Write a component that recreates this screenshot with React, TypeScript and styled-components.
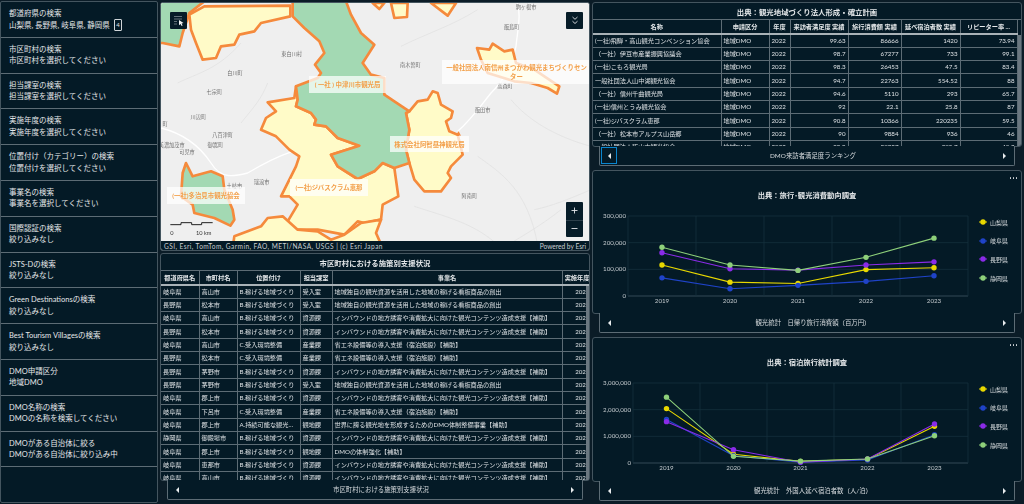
import React from "react";
import styled, { createGlobalStyle } from "styled-components";

const GlobalStyle = createGlobalStyle`
  html, body {
    margin: 0;
    padding: 0;
    background-color: #0b1c27;
  }
  body {
    font-family: Lato, "Noto Sans CJK JP", sans-serif;
    color: #e4e7e9;
    overflow: hidden;
  }
  * {
    box-sizing: border-box;
  }
`;

const Page = styled.div`
  width: 1024px;
  height: 504px;
  display: grid;
  grid-template-columns: 158px 430px 430px;
  column-gap: 2px;
  overflow: hidden;
  filter: blur(0.3px);
`;

/* ---- filter column ---- */
const FilterList = styled.div`
  margin-top: 1px;
  height: 502px;
  background-color: #041a26;
  border: 1px solid #44555f;
  border-radius: 2px;
`;
const FilterItem = styled.div`
  height: 35.8px;
  padding: 6px 8px 0;
  border-bottom: 1px solid #5d6c75;
  font-size: 7.5px;
  line-height: 11.4px;
  white-space: nowrap;
  display: flex;
  flex-direction: column;
`;
const FilterValue = styled.div`
  display: flex;
  align-items: center;
  gap: 4px;
`;
const CountBadge = styled.span`
  width: 8px;
  height: 12px;
  border: 1px solid #d0d5d8;
  border-radius: 1px;
  font-size: 6px;
  line-height: 10px;
  text-align: center;
`;

/* ---- shared panels ---- */
const Column = styled.div`
  display: flex;
  flex-direction: column;
`;
const Block = styled.div<{ $top: number }>`
  margin-top: ${(p) => p.$top}px;
  display: flex;
  flex-direction: column;
`;
const Panel = styled.div<{ $height: number }>`
  position: relative;
  height: ${(p) => p.$height}px;
  background-color: #041a26;
  border: 1px solid #44555f;
  border-radius: 3px;
  overflow: hidden;
`;
const Tab = styled.div`
  position: relative;
  height: 20px;
  margin: -1px 7px 0;
  padding: 0 7px;
  background-color: #041a26;
  border: 1px solid #5d6c75;
  border-top: none;
  border-radius: 0 0 2px 2px;
  display: flex;
  align-items: center;
  justify-content: space-between;
  font-size: 6.4px;
  color: #d8dcdf;
`;
const TabLabel = styled.span`
  margin-left: 12px;
`;
const ArrowBox = styled.div<{ $focus?: boolean }>`
  width: 16px;
  height: 17px;
  margin: 0 -6px;
  display: flex;
  align-items: center;
  justify-content: center;
  border: 1px solid ${(p) => (p.$focus ? "#0a86cf" : "transparent")};
`;
const TableTitle = styled.div`
  height: 17px;
  display: flex;
  align-items: center;
  justify-content: center;
  font-size: 7.4px;
  font-weight: 700;
  border-bottom: 1px solid #5d6c75;
`;
const DataTable = styled.table<{ $width: number }>`
  width: ${(p) => p.$width}px;
  table-layout: fixed;
  border-collapse: collapse;
  font-size: 6.2px;
`;
const HeadCell = styled.th`
  height: 14px;
  padding: 0 2px;
  font-weight: 700;
  font-size: 6.2px;
  text-align: center;
  border-right: 1px solid #5d6c75;
  border-bottom: 2px solid #a9b2b7;
  white-space: nowrap;
  overflow: hidden;
  color: #e6e9eb;
`;
const Cell = styled.td<{ $right?: boolean }>`
  height: 13.33px;
  padding: 0 2px;
  line-height: 10px;
  text-align: ${(p) => (p.$right ? "right" : "left")};
  border-right: 1px solid #5d6c75;
  border-bottom: 1px solid #5d6c75;
  white-space: nowrap;
  overflow: hidden;
  text-overflow: ellipsis;
  color: #dde1e4;
`;
const YearCell = styled(Cell)`
  text-overflow: clip;
`;
const ScrollThumb = styled.div<{ $top: number; $height: number }>`
  position: absolute;
  right: 0;
  top: ${(p) => p.$top}px;
  width: 3px;
  height: ${(p) => p.$height}px;
  background-color: #6a7780;
`;

/* ---- map ---- */
const MapFrame = styled(Panel)`
  background-color: #efefef;
  display: flex;
  flex-direction: column;
`;
const MapCanvas = styled.div`
  position: relative;
  flex: 1;
  overflow: hidden;
`;
const MapPicture = styled.svg`
  display: block;
  width: 430px;
  height: 242px;
`;
const MapLabel = styled.div<{ $x: number; $y: number; $w: number; $h: number }>`
  position: absolute;
  left: ${(p) => p.$x}px;
  top: ${(p) => p.$y}px;
  width: ${(p) => p.$w}px;
  height: ${(p) => p.$h}px;
  padding: 0 2px;
  display: flex;
  align-items: center;
  justify-content: center;
  text-align: center;
  background-color: rgba(255, 255, 255, 0.72);
  color: #f3a04a;
  font-size: 6.4px;
  font-weight: 700;
  line-height: 9px;
`;
const MapButton = styled.div<{ $x: number; $y: number }>`
  position: absolute;
  left: ${(p) => p.$x}px;
  top: ${(p) => p.$y}px;
  width: 17px;
  height: 17px;
  border-radius: 1px;
  background-color: #061c28;
  display: flex;
  align-items: center;
  justify-content: center;
`;
const ZoomStack = styled.div`
  position: absolute;
  left: 405px;
  top: 199px;
  width: 17px;
  background-color: #061c28;
  border-radius: 1px;
  display: flex;
  flex-direction: column;
`;
const ZoomButton = styled.div`
  height: 17.5px;
  display: flex;
  align-items: center;
  justify-content: center;
  & + & {
    border-top: 1px solid #2c3f4a;
  }
`;
const Attribution = styled.div`
  height: 9px;
  padding: 0 3px;
  background-color: #041a26;
  display: flex;
  align-items: center;
  justify-content: space-between;
  font-size: 6.6px;
  color: #c9ced1;
  white-space: nowrap;
`;
const AttributionSource = styled.span`
  letter-spacing: 0.42px;
`;

/* ---- charts ---- */
const Dots = styled.div`
  position: absolute;
  right: 4px;
  top: 6px;
  display: flex;
  gap: 1.5px;
`;
const Dot = styled.span`
  width: 1.5px;
  height: 1.5px;
  border-radius: 50%;
  background-color: #d6dadd;
`;
const ChartTitle = styled.div`
  height: 37px;
  padding-top: 20px;
  text-align: center;
  font-size: 7.3px;
  line-height: 10px;
  font-weight: 700;
  color: #e6e9eb;
`;
const ChartRow = styled.div`
  display: flex;
  align-items: flex-start;
`;
const ChartPicture = styled.svg`
  display: block;
  flex: none;
  width: 378px;
  height: 98px;
`;
const Legend = styled.div`
  margin: 9px 0 0 8px;
  display: flex;
  flex-direction: column;
  gap: 8.7px;
`;
const LegendItem = styled.div`
  height: 10px;
  display: flex;
  align-items: center;
  gap: 3px;
  font-size: 6px;
  color: #d3d8db;
  white-space: nowrap;
`;

const filters: [string, string][] = [
  ["都道府県の検索", "山梨県, 長野県, 岐阜県, 静岡県"],
  ["市区町村の検索", "市区町村を選択してください"],
  ["担当課室の検索", "担当課室を選択してください"],
  ["実施年度の検索", "実施年度を選択してください"],
  ["位置付け（カテゴリー）の検索", "位置付けを選択してください"],
  ["事業名の検索", "事業名を選択してください"],
  ["国際認証の検索", "絞り込みなし"],
  ["JSTS-Dの検索", "絞り込みなし"],
  ["Green Destinationsの検索", "絞り込みなし"],
  ["Best Tourism Villagesの検索", "絞り込みなし"],
  ["DMO申請区分", "地域DMO"],
  ["DMO名称の検索", "DMOの名称を検索してください"],
  ["DMOがある自治体に絞る", "DMOがある自治体に絞り込み中"],
];

const inbound = "インバウンドの地方誘客や消費拡大に向けた観光コンテンツ造成支援【補助】";
const signboard = "地域独自の観光資源を活用した地域の稼げる看板商品の創出";
const energy = "省エネ設備等の導入支援（宿泊施設）【補助】";
const kasegu = "B.稼げる地域づくり";

const supportRows: string[][] = [
  ["岐阜県", "高山市", kasegu, "受入室", signboard],
  ["長野県", "松本市", kasegu, "受入室", signboard],
  ["岐阜県", "高山市", kasegu, "資源課", inbound],
  ["長野県", "松本市", kasegu, "資源課", inbound],
  ["岐阜県", "高山市", "C.受入環境整備", "産業課", energy],
  ["長野県", "松本市", "C.受入環境整備", "産業課", energy],
  ["長野県", "茅野市", kasegu, "資源課", inbound],
  ["長野県", "茅野市", kasegu, "受入室", signboard],
  ["岐阜県", "郡上市", kasegu, "資源課", inbound],
  ["岐阜県", "下呂市", "C.受入環境整備", "産業課", energy],
  ["岐阜県", "郡上市", "A.持続可能な観光地域づくり", "観地課", "世界に誇る観光地を形成するためのDMO体制整備事業【補助】"],
  ["静岡県", "御殿場市", kasegu, "資源課", inbound],
  ["岐阜県", "郡上市", kasegu, "観地課", "DMOの体制強化【補助】"],
  ["岐阜県", "恵那市", kasegu, "資源課", inbound],
  ["岐阜県", "高山市", kasegu, "資源課", inbound],
];

const rankRows: string[][] = [
  ["(一社)飛騨・高山観光コンベンション協会", "99.63", "86666", "1420", "73.94"],
  ["（一社）伊豆市産業振興協議会", "98.7", "67277", "733", "99.1"],
  ["(一社)こもろ観光局", "98.3", "26453", "47.5", "83.4"],
  ["一般社団法人山中湖観光協会", "94.7", "22763", "554.52", "88"],
  ["（一社）信州千曲観光局", "94.6", "5110", "293", "65.7"],
  ["(一社)信州とうみ観光協会", "92", "22.1", "25.8", "87"],
  ["(一社)ジバスクラム恵那", "90.8", "10366", "220235", "59.5"],
  ["（一社）松本市アルプス山岳郷", "90", "9884", "936", "46"],
  ["一般社団法人飯山市観光協会", "88.8", "30937", "205.7", "40.9"],
];

const townLabels: [string, number, number][] = [
  ["駒ヶ根市", 1095, 18],
  ["飯島町", 1052, 79],
  ["東白川村", 392, 159],
  ["南木曽町", 748, 193],
  ["白川町", 222, 217],
  ["高森町", 1032, 254],
  ["七宗町", 160, 274],
  ["飯田市", 965, 326],
  ["川辺町", 112, 349],
  ["町", 12, 369],
  ["八百津町", 185, 403],
  ["美濃加茂市", 32, 431],
  ["御嵩町", 163, 431],
  ["可児市", 78, 453],
  ["瑞浪市", 302, 544],
  ["土岐市", 220, 556],
  ["阿南町", 925, 586],
];

const yellowAreas = [
  "85,35 130,10 388,8 388,40 300,60 280,85 235,95 220,125 180,130 165,165 125,170 105,120 90,80",
  "320,298 400,285 405,250 410,290 405,310 450,330 465,350 460,365 495,370 530,405 595,428 510,455 530,490 590,528 640,505 665,480 700,495 712,580 665,605 660,650 610,660 590,655 550,695 470,680 405,680 380,655 410,605 385,580 360,580 405,490 415,460 385,440 345,400 300,380 315,345 345,325",
  "215,735 220,700 300,670 320,645 365,640 410,680 470,685 510,710 550,695 600,660 660,650 645,690 665,735",
  "745,325 770,295 800,290 815,265 830,270 840,305 875,325 870,345 855,355 865,385 890,395 905,455 870,490 860,510 870,525 840,565 790,565 760,530 745,480 735,440 745,380 735,330",
  "690,0 740,0 738,42 700,45",
  "635,0 670,0 655,18",
  "810,0 885,0 860,38",
  "948,135 985,140 995,122 1030,145 1055,140 1065,180 1120,200 1150,220 1195,250 1188,272 1160,255 1110,240 1060,235 980,210 960,170",
];

const greenAreas = [
  "-5,-5 130,-5 85,30 65,90 55,130 5,120 -5,120",
  "395,-5 395,40 430,75 475,115 490,150 462,185 480,210 470,225 405,250 410,290 405,310 450,330 465,350 460,365 495,370 530,405 595,428 510,455 530,490 590,528 640,505 665,480 700,495 745,480 735,440 745,380 735,330 745,325 700,295 670,275 670,225 630,215 605,180 640,125 600,90 570,35 555,-5",
  "75,480 95,520 150,505 185,520 190,560 215,620 220,650 208,668 160,645 100,630 95,605 60,580 65,510",
];

const roads = [
  "M0 375 C60 390 110 420 150 480 C180 530 220 520 260 510 C310 480 350 460 395 445",
  "M890 385 C930 350 950 320 990 270 C1020 240 1050 200 1065 130 C1070 80 1080 40 1070 0",
];
const faintRoads = [
  "M720 130 C800 90 870 70 950 20",
  "M50 240 C110 210 170 200 240 120",
  "M1050 290 C1100 350 1180 400 1290 430",
  "M950 460 C1020 510 1100 560 1130 726",
  "M760 610 C850 640 940 660 1010 726",
  "M1200 620 C1150 660 1100 690 1040 726",
  "M1290 560 C1220 590 1170 610 1120 620",
  "M240 360 C280 310 300 290 320 240",
];

type Series = { name: string; color: string; values: number[] };

const prefColors = { yamanashi: "#e8d800", gifu: "#1f43c8", nagano: "#8a2be8", shizuoka: "#8ed07a" };

const dayTrip: Series[] = [
  { name: "山梨県", color: prefColors.yamanashi, values: [116000, 52000, 47000, 99000, 106000] },
  { name: "岐阜県", color: prefColors.gifu, values: [68000, 27000, 40000, 55000, 76000] },
  { name: "長野県", color: prefColors.nagano, values: [162000, 102000, 97000, 116000, 128000] },
  { name: "静岡県", color: prefColors.shizuoka, values: [183000, 116000, 96000, 145000, 217000] },
];
const foreignStay: Series[] = [
  { name: "山梨県", color: prefColors.yamanashi, values: [2040000, 330000, 60000, 140000, 1380000] },
  { name: "岐阜県", color: prefColors.gifu, values: [1630000, 270000, 30000, 110000, 1060000] },
  { name: "長野県", color: prefColors.nagano, values: [1550000, 500000, 30000, 150000, 1460000] },
  { name: "静岡県", color: prefColors.shizuoka, values: [2470000, 250000, 70000, 150000, 1020000] },
];
const years = ["2019", "2020", "2021", "2022", "2023"];

function Arrow({ dir }: { dir: "left" | "right" }) {
  return (
    <svg width="4" height="6" viewBox="0 0 4 6">
      <path d={dir === "left" ? "M4 0V6L1 3Z" : "M0 0V6L3 3Z"} fill="#e8ebed" />
    </svg>
  );
}

function TabBar({ label, focus }: { label: string; focus?: boolean }) {
  return (
    <Tab>
      <ArrowBox $focus={focus}>
        <Arrow dir="left" />
      </ArrowBox>
      <TabLabel>{label}</TabLabel>
      <ArrowBox>
        <Arrow dir="right" />
      </ArrowBox>
    </Tab>
  );
}

function LineChart({ series, max, left }: { series: Series[]; max: number; left: number }) {
  const right = 375;
  const top = 8;
  const plotH = 80;
  const band = (right - left) / 5;
  const xAt = (i: number) => left + band * (i + 0.5);
  const yAt = (v: number) => top + plotH - (v / max) * plotH;
  const ticks = [0, max / 3, (max * 2) / 3, max];
  return (
    <ChartPicture viewBox="0 0 378 98">
      {ticks.map((t) => (
        <g key={t}>
          <line x1={left} x2={right} y1={yAt(t)} y2={yAt(t)} stroke={t === 0 ? "#3f5763" : "#14303c"} strokeWidth="0.8" />
          <text x={left - 2} y={yAt(t) + 2} textAnchor="end" fontSize="6.2" fill="#c4cace">
            {t.toLocaleString("en-US")}
          </text>
        </g>
      ))}
      {[0, 1, 2, 3, 4, 5].map((i) => (
        <line key={i} x1={left + band * i} x2={left + band * i} y1={top} y2={top + plotH} stroke="#14303c" strokeWidth="0.8" />
      ))}
      {years.map((y, i) => (
        <text key={y} x={xAt(i)} y={top + plotH + 6.5} textAnchor="middle" fontSize="6.2" fill="#c4cace">
          {y}
        </text>
      ))}
      {series.map((s) => (
        <g key={s.name}>
          <polyline
            fill="none"
            stroke={s.color}
            strokeWidth="1.1"
            points={s.values.map((v, i) => `${xAt(i)},${yAt(v)}`).join(" ")}
          />
          {s.values.map((v, i) => (
            <circle key={i} cx={xAt(i)} cy={yAt(v)} r="2.7" fill={s.color} />
          ))}
        </g>
      ))}
    </ChartPicture>
  );
}

function ChartPanel({
  title,
  tab,
  series,
  max,
  left,
  height,
}: {
  title: string;
  tab: string;
  series: Series[];
  max: number;
  left: number;
  height: number;
}) {
  return (
    <>
      <Panel $height={height}>
        <Dots>
          <Dot />
          <Dot />
          <Dot />
        </Dots>
        <ChartTitle>{title}</ChartTitle>
        <ChartRow>
          <LineChart series={series} max={max} left={left} />
          <Legend>
            {series.map((s) => (
              <LegendItem key={s.name}>
                <svg width="8" height="6" viewBox="0 0 8 6">
                  <line x1="0" x2="8" y1="3" y2="3" stroke={s.color} strokeWidth="1" />
                  <circle cx="4" cy="3" r="2.7" fill={s.color} />
                </svg>
                {s.name}
              </LegendItem>
            ))}
          </Legend>
        </ChartRow>
      </Panel>
      <TabBar label={tab} />
    </>
  );
}

function MapView() {
  return (
    <MapCanvas>
      <MapPicture viewBox="0 0 1290 726">
        <rect width="1290" height="726" fill="#efefef" />
        {faintRoads.map((d) => (
          <path key={d} d={d} fill="none" stroke="#e0e0e0" strokeWidth="2" />
        ))}
        {roads.map((d) => (
          <path key={d} d={d} fill="none" stroke="#ffffff" strokeWidth="4" />
        ))}
        {townLabels.map(([name, x, y]) => (
          <text key={name} x={x} y={y} textAnchor="middle" fontSize="15.5" fill="#6f6f6f" fontFamily="'Noto Sans CJK JP', sans-serif">
            {name}
          </text>
        ))}
        {yellowAreas.map((p) => (
          <polygon key={p} points={p} fill="#fffbc8" stroke="#f58a3c" strokeWidth="8" strokeLinejoin="round" />
        ))}
        {greenAreas.map((p) => (
          <polygon key={p} points={p} fill="#a3d9b3" stroke="#f58a3c" strokeWidth="8" strokeLinejoin="round" />
        ))}
        <polygon points="885,395 893,385 900,398" fill="#f58a3c" />
        <path d="M28 665H60V659H92V665H122V659H155" fill="none" stroke="#222" strokeWidth="3" />
        <text x="33" y="696" textAnchor="middle" fontSize="17" fill="#333" fontFamily="Lato, sans-serif">
          0
        </text>
        <text x="128" y="696" textAnchor="middle" fontSize="17" fill="#333" fontFamily="Lato, sans-serif">
          10 km
        </text>
      </MapPicture>
      <MapLabel $x={148} $y={73} $w={77} $h={17}>( 一社 ) 中津川市観光局</MapLabel>
      <MapLabel $x={281} $y={57} $w={149} $h={24}>一般社団法人南信州まつかわ観光まちづくりセンター</MapLabel>
      <MapLabel $x={229} $y={133} $w={79} $h={16}>株式会社阿智昼神観光局</MapLabel>
      <MapLabel $x={129} $y={176} $w={78} $h={17}>(一社)ジバスクラム恵那</MapLabel>
      <MapLabel $x={6} $y={184} $w={78} $h={17}>(一社)多治見市観光協会</MapLabel>
      <MapButton $x={9} $y={9}>
        <svg width="10" height="10" viewBox="0 0 10 10">
          <path d="M0.5 0.5H7.5M0.5 3H7.5M0.5 5.5H3M0.5 8H3" stroke="#d8dcdf" strokeWidth="0.9" strokeDasharray="1 1" fill="none" />
          <path d="M5 4L9.5 7L7.6 7.5L8.6 9.6L7.6 10L6.6 8L5 9.2Z" fill="#f4f5f6" />
        </svg>
      </MapButton>
      <MapButton $x={405} $y={9}>
        <svg width="8" height="9" viewBox="0 0 8 9">
          <path d="M1.5 1L4 3.3L6.5 1M1.5 5.2L4 7.5L6.5 5.2" fill="none" stroke="#e4e7e9" strokeWidth="0.9" />
        </svg>
      </MapButton>
      <ZoomStack>
        <ZoomButton>
          <svg width="7" height="7" viewBox="0 0 7 7">
            <path d="M3.5 0.5V6.5M0.5 3.5H6.5" stroke="#e4e7e9" strokeWidth="0.9" />
          </svg>
        </ZoomButton>
        <ZoomButton>
          <svg width="7" height="7" viewBox="0 0 7 7">
            <path d="M0.5 3.5H6.5" stroke="#e4e7e9" strokeWidth="0.9" />
          </svg>
        </ZoomButton>
      </ZoomStack>
    </MapCanvas>
  );
}

export default function App() {
  return (
    <Page>
      <GlobalStyle />
      <FilterList>
        {filters.map(([label, value], i) => (
          <FilterItem key={label}>
            <div>{label}</div>
            <FilterValue>
              {value}
              {i === 0 && <CountBadge>4</CountBadge>}
            </FilterValue>
          </FilterItem>
        ))}
      </FilterList>

      <Column>
        <Block $top={2}>
          <MapFrame $height={249}>
            <MapView />
            <Attribution>
              <AttributionSource>GSI, Esri, TomTom, Garmin, FAO, METI/NASA, USGS | (c) Esri Japan</AttributionSource>
              <span>Powered by Esri</span>
            </Attribution>
          </MapFrame>
        </Block>
        <Block $top={2}>
          <Panel $height={228}>
            <TableTitle>市区町村における施策別支援状況</TableTitle>
            <DataTable $width={431}>
              <colgroup>
                <col width="38" />
                <col width="38" />
                <col width="63" />
                <col width="32" />
                <col width="230" />
                <col width="30" />
              </colgroup>
              <thead>
                <tr>
                  {["都道府県名", "市町村名", "位置付け", "担当課室", "事業名", "実施年度"].map((h) => (
                    <HeadCell key={h}>{h}</HeadCell>
                  ))}
                </tr>
              </thead>
              <tbody>
                {supportRows.map((row, i) => (
                  <tr key={i}>
                    {row.map((c, j) => (
                      <Cell key={j}>{c}</Cell>
                    ))}
                    <YearCell $right>2023</YearCell>
                  </tr>
                ))}
              </tbody>
            </DataTable>
            <ScrollThumb $top={32} $height={194} />
          </Panel>
          <TabBar label="市区町村における施策別支援状況" />
        </Block>
      </Column>

      <Column>
        <Block $top={2}>
          <Panel $height={145}>
            <TableTitle>出典：観光地域づくり法人形成・確立計画</TableTitle>
            <DataTable $width={424}>
              <colgroup>
                <col width="128" />
                <col width="48" />
                <col width="21" />
                <col width="58" />
                <col width="53" />
                <col width="59" />
                <col width="57" />
              </colgroup>
              <thead>
                <tr>
                  {["名称", "申請区分", "年度", "来訪者満足度 実績", "旅行消費額 実績", "延べ宿泊者数 実績", "リピーター率 ..."].map((h) => (
                    <HeadCell key={h}>{h}</HeadCell>
                  ))}
                </tr>
              </thead>
              <tbody>
                {rankRows.map((row) => (
                  <tr key={row[0]}>
                    <Cell>{row[0]}</Cell>
                    <Cell>地域DMO</Cell>
                    <Cell>2022</Cell>
                    {row.slice(1).map((c, j) => (
                      <Cell key={j} $right>{c}</Cell>
                    ))}
                  </tr>
                ))}
              </tbody>
            </DataTable>
            <ScrollThumb $top={32} $height={111} />
          </Panel>
          <TabBar label="DMO来訪者満足度ランキング" focus />
        </Block>
        <Block $top={4}>
          <ChartPanel
            title="出典：旅行･観光消費動向調査"
            tab="観光統計　日帰り旅行消費額（百万円）"
            series={dayTrip}
            max={300000}
            left={35}
            height={144}
          />
        </Block>
        <Block $top={4}>
          <ChartPanel
            title="出典：宿泊旅行統計調査"
            tab="観光統計　外国人延べ宿泊者数（人/泊）"
            series={foreignStay}
            max={3000000}
            left={40}
            height={145}
          />
        </Block>
      </Column>
    </Page>
  );
}
